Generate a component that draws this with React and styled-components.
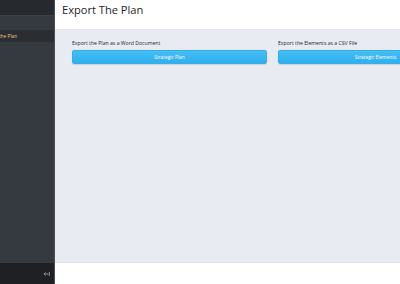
import React from "react";
import styled, { createGlobalStyle } from "styled-components";

const Global = createGlobalStyle`
  html, body { margin: 0; padding: 0; }
  body { font-family: "Open Sans", "Liberation Sans", sans-serif; background: #fff; }
  #root { width: 400px; height: 284px; overflow: hidden; }
`;

const Shell = styled.div`
  display: flex;
  width: 400px;
  height: 284px;
`;

const Sidebar = styled.aside`
  width: 54px;
  flex: 0 0 54px;
  overflow: hidden;
  background: #353a40;
  border-right: 1px solid #4b5056;
  display: flex;
  flex-direction: column;
`;

const SideInner = styled.div`
  width: 84px;
  margin-left: -30px;
  flex: 1;
  display: flex;
  flex-direction: column;
`;

const SideHeader = styled.div`
  height: 15px;
  background: #26292d;
  border-bottom: 1px solid #3d4247;
`;

const SideNav = styled.nav`
  flex: 1;
  padding-top: 14px;
`;

const NavItem = styled.div`
  height: 12px;
  display: flex;
  align-items: center;
  padding-left: 13px;
  background: ${(p) => (p.$active ? "#2a2e33" : "transparent")};
  color: ${(p) => (p.$active ? "#eec57e" : "#c2c7d0")};
  font-size: 4.8px;
  white-space: nowrap;
`;

const SideFooter = styled.div`
  height: 21px;
  background: #1e2023;
  display: flex;
  align-items: center;
  justify-content: flex-end;
  padding-right: 4px;
  color: #8a8d91;
`;

const Main = styled.div`
  flex: 1;
  display: flex;
  flex-direction: column;
  min-width: 0;
`;

const Header = styled.header`
  height: 30px;
  background: #fff;
  display: flex;
  align-items: flex-start;
  padding: 3px 0 0 7px;
  box-sizing: border-box;
  border-bottom: 1px solid #e3e6ea;
`;

const Title = styled.h1`
  margin: 0;
  font-size: 11.1px;
  line-height: 14px;
  font-weight: 400;
  color: #212529;
`;

const Content = styled.main`
  flex: 1;
  background: #e8ebf2;
  padding: 9px 0 0 17px;
  display: flex;
  gap: 11px;
  overflow: hidden;
`;

const Col = styled.section`
  flex: 0 0 195px;
  display: flex;
  flex-direction: column;
`;

const Label = styled.div`
  font-size: 5.15px;
  color: #212529;
  height: 11px;
  line-height: 8px;
  white-space: nowrap;
`;

const Button = styled.button`
  height: 14px;
  width: 100%;
  border: 1px solid #35aeea;
  border-radius: 2px;
  background: linear-gradient(#44bdf4, #30b0ef);
  color: #fff;
  font-family: inherit;
  font-size: 4.8px;
  padding: 0;
  box-shadow: 0 0.5px 1px rgba(0,0,0,0.12);
`;

const Footer = styled.footer`
  height: 21px;
  background: #fff;
  border-top: 1px solid #dee2e6;
`;

export default function App() {
  return (
    <>
      <Global />
      <Shell>
        <Sidebar>
          <SideInner>
            <SideHeader />
            <SideNav>
              <NavItem $active>Export the Plan</NavItem>
            </SideNav>
          </SideInner>
          <SideFooter>
            <svg width="7" height="6" viewBox="0 0 7 6">
              <path d="M5.5 3H1M2.6 1.4L1 3l1.6 1.6M6.3 1v4" stroke="#8c8f93" strokeWidth="1" fill="none" />
            </svg>
          </SideFooter>
        </Sidebar>
        <Main>
          <Header>
            <Title>Export The Plan</Title>
          </Header>
          <Content>
            <Col>
              <Label>Export the Plan as a Word Document</Label>
              <Button>Strategic Plan</Button>
            </Col>
            <Col>
              <Label>Export the Elements as a CSV File</Label>
              <Button>Strategic Elements</Button>
            </Col>
          </Content>
          <Footer />
        </Main>
      </Shell>
    </>
  );
}
